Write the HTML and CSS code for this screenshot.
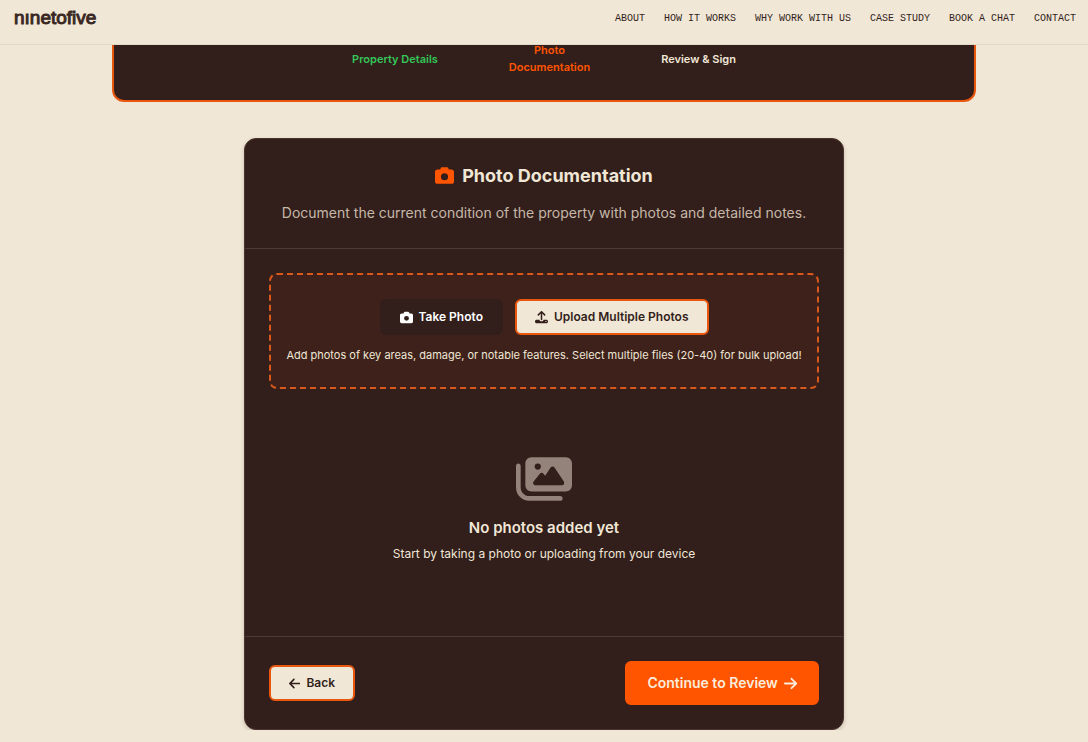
FILE: index.html
```html
<!DOCTYPE html>
<html lang="en">
<head>
    <meta charset="utf-8">
    <title>Photo Documentation</title>
    <link rel="stylesheet" href="styles.css">
</head>
<body>
    <header class="site-header">
        <a href="#" class="logo">nınetofive</a>
        <nav class="site-nav">
            <a href="#">ABOUT</a>
            <a href="#">HOW IT WORKS</a>
            <a href="#">WHY WORK WITH US</a>
            <a href="#">CASE STUDY</a>
            <a href="#">BOOK A CHAT</a>
            <a href="#">CONTACT</a>
        </nav>
    </header>

    <main>
        <ol class="progress">
            <li class="step done">Property Details</li>
            <li class="step active">Photo<br>Documentation</li>
            <li class="step">Review &amp; Sign</li>
        </ol>

        <section class="card">
            <div class="card-header">
                <h1 class="card-title">
                    <svg class="icon-title" viewBox="0 0 512 512"><path d="M149.1 64.8L138.7 96H64C28.7 96 0 124.7 0 160V416c0 35.3 28.7 64 64 64H448c35.3 0 64-28.7 64-64V160c0-35.3-28.7-64-64-64H373.3L362.9 64.8C356.4 45.2 338.1 32 317.4 32H194.6c-20.7 0-39 13.2-45.5 32.8zM256 192a96 96 0 1 1 0 192 96 96 0 1 1 0-192z"/></svg>
                    Photo Documentation
                </h1>
                <p class="card-text">Document the current condition of the property with photos and detailed notes.</p>
            </div>

            <div class="card-body">
                <div class="upload-area">
                    <div class="upload-buttons">
                        <button type="button" class="btn btn-dark">
                            <svg class="icon" viewBox="0 0 512 512"><path d="M149.1 64.8L138.7 96H64C28.7 96 0 124.7 0 160V416c0 35.3 28.7 64 64 64H448c35.3 0 64-28.7 64-64V160c0-35.3-28.7-64-64-64H373.3L362.9 64.8C356.4 45.2 338.1 32 317.4 32H194.6c-20.7 0-39 13.2-45.5 32.8zM256 192a96 96 0 1 1 0 192 96 96 0 1 1 0-192z"/></svg>
                            Take Photo
                        </button>
                        <button type="button" class="btn btn-light">
                            <svg class="icon" viewBox="0 0 512 512"><path d="M226 100v236a30 30 0 0 0 60 0V100l73 73a30 30 0 0 0 43-43L278 9a31 31 0 0 0-44 0L110 130a30 30 0 0 0 43 43zM64 344c-35 0-64 26-64 60v16c0 35 29 60 64 60h384c35 0 64-25 64-60v-16c0-34-29-60-64-60H334c0 40-34 64-78 64s-78-24-78-64zm368 46a24 24 0 1 1 0 48 24 24 0 1 1 0-48z"/></svg>
                            Upload Multiple Photos
                        </button>
                    </div>
                    <p class="upload-hint">Add photos of key areas, damage, or notable features. Select multiple files (20-40) for bulk upload!</p>
                </div>

                <div class="empty">
                    <svg class="icon-empty" viewBox="0 0 576 512"><path d="M160 32c-35.3 0-64 28.7-64 64V320c0 35.3 28.7 64 64 64H512c35.3 0 64-28.7 64-64V96c0-35.3-28.7-64-64-64H160zM396 138.7l96 144c4.9 7.4 5.4 16.8 1.2 24.6S480.9 320 472 320H328 280 200c-9.2 0-17.6-5.3-21.6-13.6s-2.9-18.2 2.9-25.4l64-80c4.6-5.7 11.4-9 18.7-9s14.2 3.3 18.7 9l17.3 21.6 56-84C360.5 132 368 128 376 128s15.5 4 20 10.7zM192 128a32 32 0 1 1 64 0 32 32 0 1 1 -64 0zM48 120c0-13.3-10.7-24-24-24S0 106.7 0 120V344c0 75.1 60.9 136 136 136H456c13.3 0 24-10.7 24-24s-10.7-24-24-24H136c-48.6 0-88-39.4-88-88V120z"/></svg>
                    <h2 class="empty-title">No photos added yet</h2>
                    <p class="empty-text">Start by taking a photo or uploading from your device</p>
                </div>
            </div>

            <div class="card-footer">
                <button type="button" class="btn btn-light">
                    <svg class="icon" viewBox="0 0 448 512"><path d="M9.4 233.4c-12.5 12.5-12.5 32.8 0 45.3l160 160c12.5 12.5 32.8 12.5 45.3 0s12.5-32.8 0-45.3L109.2 288 416 288c17.7 0 32-14.3 32-32s-14.3-32-32-32l-306.7 0L214.6 118.6c12.5-12.5 12.5-32.8 0-45.3s-32.8-12.5-45.3 0l-160 160z"/></svg>
                    Back
                </button>
                <button type="button" class="btn btn-primary">
                    Continue to Review
                    <svg class="icon icon-next" viewBox="0 0 448 512"><path d="M438.6 278.6c12.5-12.5 12.5-32.8 0-45.3l-160-160c-12.5-12.5-32.8-12.5-45.3 0s-12.5 32.8 0 45.3L338.8 224 32 224c-17.7 0-32 14.3-32 32s14.3 32 32 32l306.7 0L233.4 393.4c-12.5 12.5-12.5 32.8 0 45.3s32.8 12.5 45.3 0l160-160z"/></svg>
                </button>
            </div>
        </section>
    </main>
</body>
</html>
```
FILE: styles.css
```css
* {
    box-sizing: border-box;
    margin: 0;
    padding: 0;
}

body {
    background: #f0e7d6;
    color: #f0e7d6;
    font-family: Inter, "Liberation Sans", sans-serif;
}

svg {
    fill: currentColor;
}

.site-header {
    position: fixed;
    top: 0;
    left: 0;
    right: 0;
    z-index: 10;
    display: flex;
    justify-content: space-between;
    padding: 8px 12px 16px 14px;
    background: #f0e7d6;
    border-bottom: 1px solid #e2d9c9;
}

.logo {
    color: #3a2722;
    font-family: "Liberation Sans", Arial, sans-serif;
    font-size: 19px;
    line-height: 20px;
    text-decoration: none;
    -webkit-text-stroke: 1px #3a2722;
}

.site-nav {
    display: flex;
    align-items: center;
    gap: 19px;
}

.site-nav a {
    color: #321e1b;
    font-family: "Liberation Mono", monospace;
    font-size: 10px;
    text-decoration: none;
}

.progress {
    display: flex;
    align-items: center;
    justify-content: center;
    gap: 71px;
    max-width: 864px;
    margin: 0 auto 36px;
    padding: 40px 24px 24px;
    background: #321e1b;
    border: 2px solid #e9570f;
    border-radius: 12px;
    list-style: none;
}

.step {
    font-size: 11px;
    font-weight: 600;
    line-height: 17px;
    text-align: center;
}

.done {
    color: #34c759;
}

.active {
    color: #ff5500;
}

.card {
    max-width: 600px;
    margin: 0 auto;
    background: #321e1b;
    border: 1px solid #4a332d;
    border-radius: 12px;
    box-shadow: 0 2px 4px rgba(50, 30, 27, 0.2);
}

.card-header {
    padding: 24px;
    border-bottom: 1px solid #4d3a36;
    text-align: center;
}

.card-title {
    display: flex;
    align-items: center;
    justify-content: center;
    gap: 8px;
    margin-bottom: 14px;
    font-size: 18px;
    font-weight: 700;
    line-height: 25px;
}

.icon-title {
    width: 19px;
    height: 19px;
    color: #ff5500;
}

.card-text {
    color: #c6b8a8;
    font-size: 14px;
    line-height: 22px;
}

.card-body {
    padding: 24px;
}

.upload-area {
    padding: 24px 12px;
    background: #3d211a;
    border: 2px dashed #d9581c;
    border-radius: 8px;
    text-align: center;
}

.upload-buttons {
    display: flex;
    justify-content: center;
    gap: 12px;
    margin-bottom: 12px;
}

.btn {
    display: flex;
    align-items: center;
    gap: 6px;
    padding: 8px 18px;
    border: 2px solid transparent;
    border-radius: 6px;
    font-family: inherit;
    font-size: 12px;
    font-weight: 600;
    line-height: 16px;
    cursor: pointer;
}

.btn-dark {
    background: #321e1b;
    border-color: #321e1b;
    color: #fff;
}

.btn-light {
    background: #f0e7d6;
    border-color: #e9570f;
    color: #321e1b;
}

.btn-primary {
    padding: 12px 20px;
    background: #ff5500;
    border-color: #ff5500;
    color: #f9ecda;
    font-size: 14px;
}

.icon {
    height: 13px;
}

.icon-next {
    height: 15px;
}

.upload-hint {
    font-size: 11px;
    line-height: 16px;
}

.empty {
    display: flex;
    flex-direction: column;
    align-items: center;
    padding: 65px 0 48px;
    text-align: center;
}

.icon-empty {
    width: 56px;
    height: 50px;
    margin-bottom: 12px;
    color: #94837a;
}

.empty-title {
    margin-bottom: 4px;
    font-size: 15px;
    font-weight: 600;
    line-height: 24px;
}

.empty-text {
    font-size: 12px;
    line-height: 20px;
}

.card-footer {
    display: flex;
    align-items: center;
    justify-content: space-between;
    padding: 24px;
    border-top: 1px solid #4d3a36;
}
```
